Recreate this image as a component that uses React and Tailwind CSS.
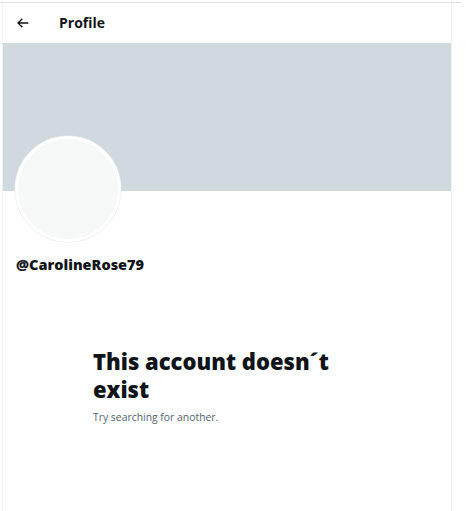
export default function App() {
  return (
    <div className="w-[471px] h-[511px] bg-white overflow-hidden" style={{ fontFamily: '"Open Sans", "Noto Sans", "Liberation Sans", sans-serif' }}>
      <div className="h-[2px]" />
      <div className="w-[461px] h-px bg-[#e1e1e1]" />
      <div className="ml-[2px] w-[450px] h-[508px] border-l border-r border-[#eff3f4] flex flex-col">
        <div className="h-[40px] flex items-center">
          <svg className="ml-[12px]" width="16" height="16" viewBox="0 0 24 24" fill="none">
            <path d="M20 12H5M11 5.5L4.5 12L11 18.5" stroke="#0f1419" strokeWidth="2" />
          </svg>
          <span className="ml-[28px] text-[14px] font-bold text-[#0f1419] leading-none">Profile</span>
        </div>
        <div className="h-[148px] bg-[#cfd9de] shrink-0" />
        <div className="ml-[12px] -mt-[55px] w-[106px] h-[106px] rounded-full bg-white p-[3px] shadow-[0_0_0_0.5px_#e6e9ea]">
          <div className="w-full h-full rounded-full bg-[#f7f9f9]" />
        </div>
        <div className="ml-[13px] mt-[13px] text-[14.5px] font-extrabold text-[#0f1419] leading-[20px]">@CarolineRose79</div>
        <div className="ml-[90px] mt-[72px] w-[270px]">
          <div className="text-[22px] font-extrabold text-[#0f1419] leading-[28px]">This account doesn´t exist</div>
          <div className="mt-[7px] text-[10.4px] text-[#536471] leading-[14px]">Try searching for another.</div>
        </div>
      </div>
    </div>
  );
}
